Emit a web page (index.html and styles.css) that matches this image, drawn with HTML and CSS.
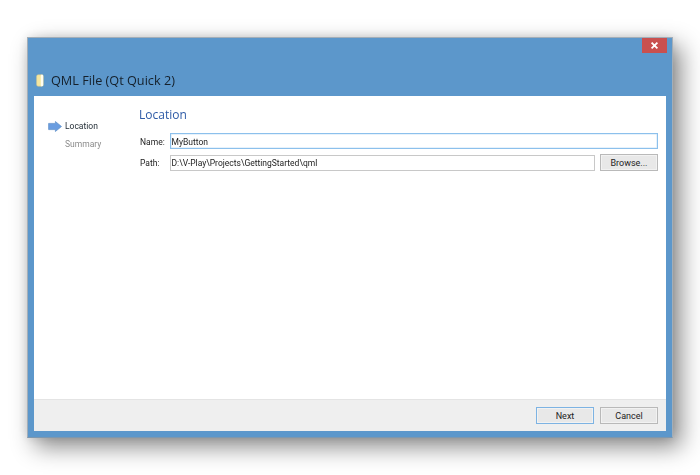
FILE: index.html
```html
<!DOCTYPE html>
<html lang="en">
<head>
<meta charset="utf-8">
<title>QML File (Qt Quick 2)</title>
<link rel="stylesheet" href="styles.css">
</head>
<body>
<div class="window">
  <div class="titlebar">
    <div class="controls">
      <button class="close" aria-label="Close">
        <svg width="9" height="9" viewBox="0 0 9 9"><path d="M1.6 1.6 7.4 7.4M7.4 1.6 1.6 7.4" stroke="#fff" stroke-width="1.8" fill="none"/></svg>
      </button>
    </div>
    <div class="title">
      <svg class="file-icon" width="8" height="13" viewBox="0 0 8 13">
        <path d="M2.2.8H6C6.8.8 7.2 1.2 7.2 2V11C7.2 11.8 6.8 12.2 6 12.2H2.2C1.2 12.2.6 11.5.6 10.5V2.5C.6 1.5 1.2.8 2.2.8Z" fill="#f5e6a0" stroke="#d8c88c" stroke-width=".5"/>
        <path d="M4.8.8H6C6.8.8 7.2 1.2 7.2 2V11C7.2 11.8 6.8 12.2 6 12.2H4.8Z" fill="#fffdf0"/>
      </svg>
      <span>QML File (Qt Quick 2)</span>
    </div>
  </div>
  <div class="client">
    <div class="main">
      <nav class="steps">
        <div class="step current">
          <svg class="arrow" width="14" height="11" viewBox="0 0 14 11">
            <path d="M.6 2.4H7.4V.5L13.5 5.5 7.4 10.5V8.6H.6Z" fill="#6a9de0" stroke="#5f8fc8" stroke-width=".7"/>
          </svg>
          <span>Location</span>
        </div>
        <div class="step pending"><span>Summary</span></div>
      </nav>
      <section class="page">
        <h1>Location</h1>
        <div class="form">
          <label>Name:</label>
          <input class="field focus span" type="text" value="MyButton">
          <label>Path:</label>
          <input class="field" type="text" value="D:\V-Play\Projects\GettingStarted\qml">
          <button class="btn">Browse...</button>
        </div>
      </section>
    </div>
    <div class="footer">
      <button class="btn default">Next</button>
      <button class="btn">Cancel</button>
    </div>
  </div>
</div>
</body>
</html>
```
FILE: styles.css
```css
* { box-sizing: border-box; }
html, body { margin: 0; height: 100%; overflow: hidden; background: #fff; }
body { padding: 37px 27px; font-family: Roboto, "Noto Sans", sans-serif; font-size: 8.5px; color: #222; }
.window {
  width: 646px; height: 401px;
  display: flex; flex-direction: column;
  background: #5c97cb;
  border: 1px solid #a3aeb8;
  border-bottom-color: #7d97ae;
  box-shadow: 8px 9px 22px rgba(0,0,0,.46), 0 0 10px rgba(0,0,0,.12);
  padding: 0 6px 6px;
  filter: blur(.3px);
}
.titlebar { height: 58px; display: flex; flex-direction: column; flex: none; }
.controls { display: flex; justify-content: flex-end; margin-right: -1px; }
.close {
  width: 25px; height: 15px; margin: 0; padding: 0; border: 0;
  background: #c9504f; display: flex; align-items: center; justify-content: center;
}
.title { display: flex; align-items: center; gap: 6px; margin-top: 16px; height: 22px; font-family: "Open Sans", sans-serif; font-size: 12.7px; color: #15202b; }
.file-icon { flex: none; margin-left: 2px; margin-right: 1px; }
.client { flex: 1; display: flex; flex-direction: column; background: #fff; min-height: 0; }
.main { flex: 1; display: flex; min-height: 0; }
.steps { width: 105px; padding: 21.5px 0 0 14px; flex: none; }
.step { display: flex; align-items: center; height: 17.5px; font-size: 8.5px; }
.step span { margin-left: 17px; }
.step .arrow + span { margin-left: 3px; }
.current { color: #1f2a33; }
.pending { color: #8b8b8b; }
.page { flex: 1; padding: 9.5px 8px 0 0; }
h1 { margin: 0 0 10.5px; font-family: "Open Sans", sans-serif; font-size: 12px; font-weight: 400; line-height: 17px; color: #2d5aa6; }
.form { display: grid; grid-template-columns: 25.5px 1fr 58px; gap: 5px 5px; align-items: center; }
label { font-size: 8.5px; color: #222; padding: 1px 0 0 1px; white-space: nowrap; }
.field {
  height: 16px; min-width: 0; width: 100%; padding: 1px 1px 0; margin: 0;
  border: 1px solid #c8c8c8; outline: 0; background: #fff;
  font: 8.5px Roboto, "Noto Sans", sans-serif; color: #222;
}
.span { grid-column: 2 / 4; }
.focus { border-color: #8cc0ec; box-shadow: inset 0 0 0 .5px #cfe5f8; }
.btn {
  height: 17px; width: 58px; margin: 0; padding: 0;
  border: 1px solid #b9b9b9; background: #e8e8e8;
  box-shadow: inset 0 0 0 1px #f2f2f2;
  font: 9px Roboto, "Noto Sans", sans-serif; color: #222;
}
.default { border-color: #7db3e3; }
.footer {
  height: 32px; flex: none; display: flex; justify-content: flex-end; gap: 6px;
  padding: 7px 8px 0 0; background: #efefef; border-top: 1px solid #e4e4e4;
}
```
